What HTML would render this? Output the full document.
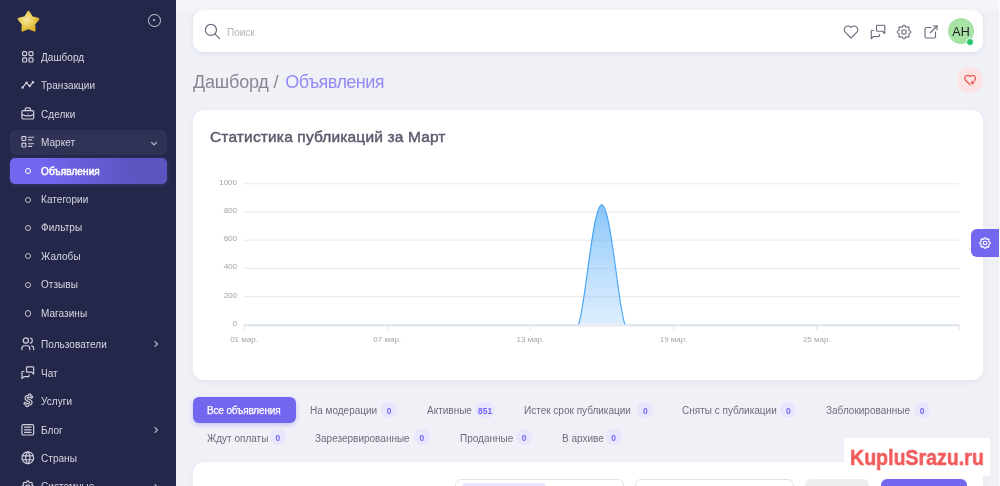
<!DOCTYPE html>
<html><head><meta charset="utf-8">
<style>
*{box-sizing:border-box;margin:0;padding:0}
html,body{width:1000px;height:486px;overflow:hidden}
body{position:relative;background:#f0f1f7;font-family:"Liberation Sans",sans-serif}
.a{position:absolute;white-space:nowrap;line-height:1;will-change:transform}
#sb{position:absolute;left:0;top:0;width:176px;height:486px;background:#25274a}
.mi{position:absolute;left:40.8px;font-size:10px;letter-spacing:0.05px;color:#d6d7e2;margin-top:0.4px}
.ic{position:absolute;left:20.2px;width:15.6px;height:15.6px;fill:none;stroke:#cfd0dc;stroke-width:1.85;stroke-linecap:round;stroke-linejoin:round}
.dot{position:absolute;left:24.6px;width:6.2px;height:6.2px;border:1.2px solid #bfc0cc;margin-top:0.2px;border-radius:50%}
.chev{position:absolute;width:8px;height:8px;fill:none;stroke:#b8b9c6;stroke-width:1;stroke-linecap:round;stroke-linejoin:round}
.card{position:absolute;background:#fff;border-radius:11px;box-shadow:0 2px 6px rgba(70,90,170,0.07)}
.hi{position:absolute;top:22.7px;width:18px;height:18px;fill:none;stroke:#6f6b7d;stroke-width:1.55;stroke-linecap:round;stroke-linejoin:round}
.tab{position:absolute;font-size:10px;color:#6f6b7d;margin-top:1.3px}
.bd{position:absolute;height:16px;min-width:16px;border-radius:8px;background:#e8e6fc;color:#7367f0;font-size:8.5px;font-weight:bold;line-height:18.4px;text-align:center;padding:0 2px}
.yl{position:absolute;font-size:8px;color:#a3a3ab;text-align:right;width:30px;left:207px;margin-top:-0.8px}
.xl{position:absolute;font-size:8px;color:#a3a3ab;width:60px;text-align:center;top:334.5px}
</style></head><body>
<!-- SIDEBAR -->
<div id="sb">
  <!-- star logo -->
  <svg class="a" style="left:0;top:0;width:60px;height:45px" viewBox="0 0 60 45">
    <defs>
      <radialGradient id="sg" gradientUnits="userSpaceOnUse" cx="26.5" cy="19.5" r="12.5">
        <stop offset="0" stop-color="#f5e6a0"/>
        <stop offset="0.45" stop-color="#ecd262"/>
        <stop offset="1" stop-color="#d9ab22"/>
      </radialGradient>
    </defs>
    <polygon points="28.50,12.20 31.85,17.59 38.01,19.11 33.92,23.96 34.38,30.29 28.50,27.90 22.62,30.29 23.08,23.96 18.99,19.11 25.15,17.59" fill="url(#sg)" stroke="url(#sg)" stroke-width="2.6" stroke-linejoin="round"/>
  </svg>
  <!-- toggle circle -->
  <div class="a" style="left:147.7px;top:14px;width:12.8px;height:12.8px;border:1.5px solid #c9cad6;border-radius:50%"></div>
  <div class="a" style="left:153.1px;top:19.4px;width:2px;height:2px;background:#c9cad6;border-radius:50%"></div>

  <!-- Дашборд -->
  <svg class="ic" style="top:49.2px" viewBox="0 0 24 24"><rect x="4" y="4" width="6.2" height="6.2" rx="1.6"/><rect x="13.8" y="4" width="6.2" height="6.2" rx="1.6"/><rect x="4" y="13.8" width="6.2" height="6.2" rx="1.6"/><rect x="13.8" y="13.8" width="6.2" height="6.2" rx="1.6"/></svg>
  <div class="a mi" style="top:52.3px">Дашборд</div>
  <!-- Транзакции -->
  <svg class="ic" style="top:77.2px" viewBox="0 0 24 24"><path d="M4 16l6 -7l5 5l5 -6"/><circle cx="15" cy="14" r="1"/><circle cx="10" cy="9" r="1"/><circle cx="4" cy="16" r="1"/><circle cx="20" cy="8" r="1"/></svg>
  <div class="a mi" style="top:81px">Транзакции</div>
  <!-- Сделки -->
  <svg class="ic" style="top:105.9px" viewBox="0 0 24 24"><path d="M3 9a2 2 0 0 1 2 -2h14a2 2 0 0 1 2 2v9a2 2 0 0 1 -2 2h-14a2 2 0 0 1 -2 -2z"/><path d="M8 7v-2a2 2 0 0 1 2 -2h4a2 2 0 0 1 2 2v2"/><path d="M12 12l0 .01"/><path d="M3 13a20 20 0 0 0 18 0"/></svg>
  <div class="a mi" style="top:109.5px">Сделки</div>
  <!-- Маркет group -->
  <div class="a" style="left:10px;top:130px;width:157.3px;height:25px;background:#2f3155;border-radius:6px"></div>
  <svg class="ic" style="top:134.1px" viewBox="0 0 24 24"><path d="M13 5h8"/><path d="M13 9h5"/><path d="M13 15h8"/><path d="M13 19h5"/><path d="M4 4h4a1 1 0 0 1 1 1v4a1 1 0 0 1 -1 1h-4a1 1 0 0 1 -1 -1v-4a1 1 0 0 1 1 -1z"/><path d="M4 14h4a1 1 0 0 1 1 1v4a1 1 0 0 1 -1 1h-4a1 1 0 0 1 -1 -1v-4a1 1 0 0 1 1 -1z"/></svg>
  <div class="a mi" style="top:138px">Маркет</div>
  <svg class="chev" style="left:150px;top:140px" viewBox="0 0 8 8"><path d="M1.6 2.3l2.4 2.6l2.4 -2.6" stroke-width="1.25"/></svg>
  <!-- active -->
  <div class="a" style="left:10px;top:158px;width:157px;height:25.5px;border-radius:5px;background:linear-gradient(72deg,#7367f0 22%,rgba(115,103,240,0.72) 76%);box-shadow:0 1px 4px rgba(115,103,240,0.25)"></div>
  <div class="dot" style="top:168px;border-color:#fff;border-width:1.6px"></div>
  <div class="a mi" style="top:166.7px;color:#fff;font-size:10px;letter-spacing:0.1px;-webkit-text-stroke:0.5px #fff">Объявления</div>
  <!-- sub items -->
  <div class="dot" style="top:196.6px"></div><div class="a mi" style="top:194.7px">Категории</div>
  <div class="dot" style="top:224.7px"></div><div class="a mi" style="top:223.1px">Фильтры</div>
  <div class="dot" style="top:253.1px"></div><div class="a mi" style="top:251.5px">Жалобы</div>
  <div class="dot" style="top:281.7px"></div><div class="a mi" style="top:280px">Отзывы</div>
  <div class="dot" style="top:310.3px"></div><div class="a mi" style="top:308.5px">Магазины</div>
  <!-- Пользователи -->
  <svg class="ic" style="top:336.2px" viewBox="0 0 24 24"><circle cx="9" cy="7" r="4"/><path d="M3 21v-2a4 4 0 0 1 4 -4h4a4 4 0 0 1 4 4v2"/><path d="M16 3.13a4 4 0 0 1 0 7.75"/><path d="M21 21v-2a4 4 0 0 0 -3 -3.85"/></svg>
  <div class="a mi" style="top:340px">Пользователи</div>
  <svg class="chev" style="left:151.6px;top:340px" viewBox="0 0 8 8"><path d="M3 1.6l2.4 2.4l-2.4 2.4" stroke-width="1.25"/></svg>
  <!-- Чат -->
  <svg class="ic" style="top:365px" viewBox="0 0 24 24"><path d="M21 14l-3 -3h-7a1 1 0 0 1 -1 -1v-6a1 1 0 0 1 1 -1h9a1 1 0 0 1 1 1v10"/><path d="M14 15v2a1 1 0 0 1 -1 1h-7l-3 3v-10a1 1 0 0 1 1 -1h2"/></svg>
  <div class="a mi" style="top:368.5px">Чат</div>
  <!-- Услуги -->
  <svg class="ic" style="top:392.3px;left:19.8px;width:16.6px;height:16.6px;stroke-width:1.7" viewBox="0 0 24 24"><path d="M17.1 8.648a.568 .568 0 0 1 -.761 .011a5.682 5.682 0 0 0 -3.659 -1.34c-1.102 0 -2.205 .363 -2.205 1.374c0 1.023 1.182 1.364 2.546 1.875c2.386 .796 4.363 1.796 4.363 4.137c0 2.545 -1.977 4.295 -5.204 4.488l-.295 1.364a.557 .557 0 0 1 -.546 .443h-2.034l-.102 -.011a.568 .568 0 0 1 -.432 -.67l.318 -1.444a7.432 7.432 0 0 1 -3.273 -1.784v-.011a.545 .545 0 0 1 0 -.773l1.137 -1.102c.214 -.2 .547 -.2 .761 0a5.495 5.495 0 0 0 3.852 1.5c1.478 0 2.466 -.625 2.466 -1.614c0 -.989 -1 -1.25 -2.886 -1.954c-2 -.716 -3.898 -1.728 -3.898 -4.091c0 -2.75 2.284 -4.091 4.989 -4.216l.284 -1.398a.545 .545 0 0 1 .545 -.432h2.023l.114 .012a.544 .544 0 0 1 .42 .647l-.307 1.557a8.528 8.528 0 0 1 2.818 1.58l.023 .022c.216 .228 .216 .569 0 .773l-1.057 1.057z"/></svg>
  <div class="a mi" style="top:397px">Услуги</div>
  <!-- Блог -->
  <svg class="ic" style="top:421.7px" viewBox="0 0 24 24"><path d="M5 4h14a2 2 0 0 1 2 2v12a2 2 0 0 1 -2 2h-14a2 2 0 0 1 -2 -2v-12a2 2 0 0 1 2 -2z"/><path d="M7 8h10"/><path d="M7 12h10"/><path d="M7 16h10"/></svg>
  <div class="a mi" style="top:425.5px">Блог</div>
  <svg class="chev" style="left:151.6px;top:426px" viewBox="0 0 8 8"><path d="M3 1.6l2.4 2.4l-2.4 2.4" stroke-width="1.25"/></svg>
  <!-- Страны -->
  <svg class="ic" style="top:450px" viewBox="0 0 24 24"><circle cx="12" cy="12" r="9"/><path d="M3.6 9h16.8"/><path d="M3.6 15h16.8"/><path d="M11.5 3a17 17 0 0 0 0 18"/><path d="M12.5 3a17 17 0 0 1 0 18"/></svg>
  <div class="a mi" style="top:454px">Страны</div>
  <!-- Системное -->
  <svg class="ic" style="top:478.7px" viewBox="0 0 24 24"><path d="M10.325 4.317c.426 -1.756 2.924 -1.756 3.35 0a1.724 1.724 0 0 0 2.573 1.066c1.543 -.94 3.31 .826 2.37 2.37a1.724 1.724 0 0 0 1.065 2.572c1.756 .426 1.756 2.924 0 3.35a1.724 1.724 0 0 0 -1.066 2.573c.94 1.543 -.826 3.31 -2.37 2.37a1.724 1.724 0 0 0 -2.572 1.065c-.426 1.756 -2.924 1.756 -3.35 0a1.724 1.724 0 0 0 -2.573 -1.066c-1.543 .94 -3.31 -.826 -2.37 -2.37a1.724 1.724 0 0 0 -1.065 -2.572c-1.756 -.426 -1.756 -2.924 0 -3.35a1.724 1.724 0 0 0 1.066 -2.573c-.94 -1.543 .826 -3.31 2.37 -2.37c1 .608 2.296 .07 2.572 -1.065z"/><circle cx="12" cy="12" r="3"/></svg>
  <div class="a mi" style="top:481.3px">Системные</div>
  <svg class="chev" style="left:151.6px;top:482.5px" viewBox="0 0 8 8"><path d="M3 1.6l2.4 2.4l-2.4 2.4" stroke-width="1.25"/></svg>
</div>

<!-- right edge strip -->
<div class="a" style="left:998.5px;top:0;width:1.5px;height:486px;background:#fbfbfc"></div>

<!-- HEADER -->
<div class="a" style="left:176px;top:0;width:823px;height:14px;background:linear-gradient(180deg,rgba(248,248,252,0.75) 0%,rgba(248,248,252,0.4) 60%,rgba(248,248,252,0) 100%)"></div>
<div class="card" style="left:192.8px;top:10.4px;width:790px;height:42px;border-radius:10px;box-shadow:0 2px 5px rgba(60,80,180,0.11)"></div>
<svg class="a" style="left:203px;top:22px;width:19px;height:19px;fill:none;stroke:#6f6b7d;stroke-width:1.6;stroke-linecap:round" viewBox="0 0 24 24"><circle cx="10" cy="10" r="7"/><path d="M21 21l-6 -6"/></svg>
<div class="a" style="left:226.8px;top:27.8px;font-size:10px;color:#b3b1bb">Поиск</div>

<svg class="hi" style="left:842px" viewBox="0 0 24 24"><path d="M19.5 12.572l-7.5 7.428l-7.5 -7.428a5 5 0 1 1 7.5 -6.566a5 5 0 1 1 7.5 6.572"/></svg>
<svg class="hi" style="left:868.6px" viewBox="0 0 24 24"><path d="M21 14l-3 -3h-7a1 1 0 0 1 -1 -1v-6a1 1 0 0 1 1 -1h9a1 1 0 0 1 1 1v10"/><path d="M14 15v2a1 1 0 0 1 -1 1h-7l-3 3v-10a1 1 0 0 1 1 -1h2"/></svg>
<svg class="hi" style="left:895.3px" viewBox="0 0 24 24"><path d="M10.325 4.317c.426 -1.756 2.924 -1.756 3.35 0a1.724 1.724 0 0 0 2.573 1.066c1.543 -.94 3.31 .826 2.37 2.37a1.724 1.724 0 0 0 1.065 2.572c1.756 .426 1.756 2.924 0 3.35a1.724 1.724 0 0 0 -1.066 2.573c.94 1.543 -.826 3.31 -2.37 2.37a1.724 1.724 0 0 0 -2.572 1.065c-.426 1.756 -2.924 1.756 -3.35 0a1.724 1.724 0 0 0 -2.573 -1.066c-1.543 .94 -3.31 -.826 -2.37 -2.37a1.724 1.724 0 0 0 -1.065 -2.572c-1.756 -.426 -1.756 -2.924 0 -3.35a1.724 1.724 0 0 0 1.066 -2.573c-.94 -1.543 .826 -3.31 2.37 -2.37c1 .608 2.296 .07 2.572 -1.065z"/><circle cx="12" cy="12" r="3"/></svg>
<svg class="hi" style="left:921.7px" viewBox="0 0 24 24"><path d="M12 6h-6a2 2 0 0 0 -2 2v10a2 2 0 0 0 2 2h10a2 2 0 0 0 2 -2v-6"/><path d="M11 13l9 -9"/><path d="M15 4h5v5"/></svg>
<!-- avatar -->
<div class="a" style="left:948px;top:18px;width:26px;height:26px;border-radius:50%;background:#a7e3a4"></div>
<div class="a" style="left:947.5px;top:25.6px;width:26px;text-align:center;font-size:12.5px;color:#222">AH</div>
<div class="a" style="left:965.5px;top:38px;width:7.5px;height:7.5px;border-radius:50%;background:#28c76f;border:1.2px solid #fff"></div>

<!-- breadcrumb -->
<div class="a" style="left:192.5px;top:72.5px;font-size:18px;letter-spacing:-0.2px;color:#8a8793">Дашборд /<span style="color:#938bf4;margin-left:7px;letter-spacing:-0.55px">Объявления</span></div>
<!-- pink heart btn -->
<div class="a" style="left:956.5px;top:66.5px;width:26px;height:26px;border-radius:50%;background:#fce3e3"></div>
<svg class="a" style="left:962.5px;top:73.2px;width:14.3px;height:14.3px;fill:none;stroke:#ea5455;stroke-width:2.1;stroke-linecap:round;stroke-linejoin:round" viewBox="0 0 24 24"><path d="M12 20l-7.5 -7.428a5 5 0 1 1 7.5 -6.566a5 5 0 1 1 7.5 6.572"/><path d="M13.8 16.2h4.4"/><path d="M16 14v4.4"/></svg>

<!-- CHART CARD -->
<div class="card" style="left:193px;top:110px;width:790px;height:270px"></div>
<div class="a" style="left:209.7px;top:129.3px;font-size:15.5px;color:#5d596c;-webkit-text-stroke:0.45px #5d596c;letter-spacing:0.15px">Статистика публикаций за Март</div>

<div class="yl" style="top:178.5px">1000</div>
<div class="yl" style="top:206.7px">800</div>
<div class="yl" style="top:234.9px">600</div>
<div class="yl" style="top:263.1px">400</div>
<div class="yl" style="top:291.3px">200</div>
<div class="yl" style="top:319.5px">0</div>

<svg class="a" style="left:0;top:0;width:1000px;height:486px" viewBox="0 0 1000 486">
  <defs>
    <linearGradient id="ag" x1="0" y1="0" x2="0" y2="1">
      <stop offset="0" stop-color="#48a6f8" stop-opacity="0.65"/>
      <stop offset="1" stop-color="#8cc6fb" stop-opacity="0.3"/>
    </linearGradient>
  </defs>
  <g stroke="#e9e9ec" stroke-width="1">
    <line x1="244" y1="183.8" x2="959.5" y2="183.8"/>
    <line x1="244" y1="212" x2="959.5" y2="212"/>
    <line x1="244" y1="240.2" x2="959.5" y2="240.2"/>
    <line x1="244" y1="268.4" x2="959.5" y2="268.4"/>
    <line x1="244" y1="296.6" x2="959.5" y2="296.6"/>
  </g>
  <line x1="244" y1="325.7" x2="959.5" y2="325.7" stroke="#d9dbe2" stroke-width="1.1"/>
  <g stroke="#e3e3e8" stroke-width="1">
    <line x1="244" y1="326" x2="244" y2="330"/>
    <line x1="387.2" y1="326" x2="387.2" y2="330"/>
    <line x1="530.4" y1="326" x2="530.4" y2="330"/>
    <line x1="673.6" y1="326" x2="673.6" y2="330"/>
    <line x1="816.8" y1="326" x2="816.8" y2="330"/>
    <line x1="959.5" y1="326" x2="959.5" y2="330"/>
  </g>
  <path d="M578.4 324.5C584.5 314 592.5 204.8 601.8 204.8C611 204.8 619 314 625.1 324.5Z" fill="url(#ag)"/>
  <path d="M578.4 324.5C584.5 314 592.5 204.8 601.8 204.8C611 204.8 619 314 625.1 324.5" fill="none" stroke="#3a9ef5" stroke-width="1.2" stroke-opacity="0.9"/>
  <line x1="244" y1="324.5" x2="578.4" y2="324.5" stroke="#dbeaf7" stroke-width="1.2"/>
  <line x1="625.1" y1="324.5" x2="959.5" y2="324.5" stroke="#dbeaf7" stroke-width="1.2"/>
</svg>
<div class="xl" style="left:214px">01 мар.</div>
<div class="xl" style="left:357.2px">07 мар.</div>
<div class="xl" style="left:500.4px">13 мар.</div>
<div class="xl" style="left:643.6px">19 мар.</div>
<div class="xl" style="left:786.8px">25 мар.</div>

<!-- settings tab -->
<div class="a" style="left:971px;top:229px;width:28px;height:28px;background:#7367f0;border-radius:6px 0 0 6px"></div>
<svg class="a" style="left:977.9px;top:236.2px;width:14px;height:14px;fill:none;stroke:#fff;stroke-width:2.1;stroke-linecap:round;stroke-linejoin:round" viewBox="0 0 24 24"><path d="M10.325 4.317c.426 -1.756 2.924 -1.756 3.35 0a1.724 1.724 0 0 0 2.573 1.066c1.543 -.94 3.31 .826 2.37 2.37a1.724 1.724 0 0 0 1.065 2.572c1.756 .426 1.756 2.924 0 3.35a1.724 1.724 0 0 0 -1.066 2.573c.94 1.543 -.826 3.31 -2.37 2.37a1.724 1.724 0 0 0 -2.572 1.065c-.426 1.756 -2.924 1.756 -3.35 0a1.724 1.724 0 0 0 -2.573 -1.066c-1.543 .94 -3.31 -.826 -2.37 -2.37a1.724 1.724 0 0 0 -1.065 -2.572c-1.756 -.426 -1.756 -2.924 0 -3.35a1.724 1.724 0 0 0 1.066 -2.573c-.94 -1.543 .826 -3.31 2.37 -2.37c1 .608 2.296 .07 2.572 -1.065z"/><circle cx="12" cy="12" r="3"/></svg>

<!-- TABS -->
<div class="a" style="left:193px;top:397px;width:102.5px;height:25.5px;background:#7367f0;border-radius:6px;box-shadow:0 2px 5px rgba(115,103,240,0.35)"></div>
<div class="a tab" style="left:207px;top:404.8px;color:#fff;letter-spacing:-0.15px;-webkit-text-stroke:0.25px #fff">Все объявления</div>

<div class="a tab" style="left:310.4px;top:405px">На модерации</div><div class="bd" style="left:381.2px;top:401.5px">0</div>
<div class="a tab" style="left:426.8px;top:405px">Активные</div><div class="bd" style="left:474.8px;top:401.5px;min-width:20.5px">851</div>
<div class="a tab" style="left:524.1px;top:405px">Истек срок публикации</div><div class="bd" style="left:637.4px;top:401.5px">0</div>
<div class="a tab" style="left:682.3px;top:405px">Сняты с публикации</div><div class="bd" style="left:780.3px;top:401.5px">0</div>
<div class="a tab" style="left:825.8px;top:405px">Заблокированные</div><div class="bd" style="left:914.2px;top:401.5px">0</div>

<div class="a tab" style="left:206.7px;top:432.5px">Ждут оплаты</div><div class="bd" style="left:269.9px;top:429px">0</div>
<div class="a tab" style="left:315.1px;top:432.5px">Зарезервированные</div><div class="bd" style="left:413.9px;top:429px">0</div>
<div class="a tab" style="left:459.5px;top:432.5px">Проданные</div><div class="bd" style="left:516.2px;top:429px">0</div>
<div class="a tab" style="left:561.7px;top:432.5px">В архиве</div><div class="bd" style="left:605.6px;top:429px">0</div>

<!-- BOTTOM CARD -->
<div class="card" style="left:193px;top:461.5px;width:790px;height:60px"></div>
<div class="a" style="left:454.5px;top:479px;width:169px;height:30px;border:1px solid #e2e1e6;border-radius:6px"></div>
<div class="a" style="left:462px;top:483px;width:84px;height:20px;background:#e9e7fd;border-radius:4px"></div>
<div class="a" style="left:635px;top:479px;width:158.5px;height:30px;border:1px solid #e2e1e6;border-radius:6px"></div>
<div class="a" style="left:805.3px;top:479.4px;width:64px;height:30px;background:#ededf0;border-radius:6px"></div>
<div class="a" style="left:881.2px;top:479.4px;width:85.5px;height:30px;background:#7367f0;border-radius:6px"></div>

<!-- WATERMARK -->
<div class="a" style="left:844px;top:437.7px;width:146px;height:37.5px;background:#fff"></div>
<div class="a" style="left:850.4px;top:446.6px;font-size:22px;font-weight:bold;color:#f05a5b;-webkit-text-stroke:0.5px #f05a5b;transform:scaleX(0.89);transform-origin:0 0">KupluSrazu.ru</div>
</body></html>
